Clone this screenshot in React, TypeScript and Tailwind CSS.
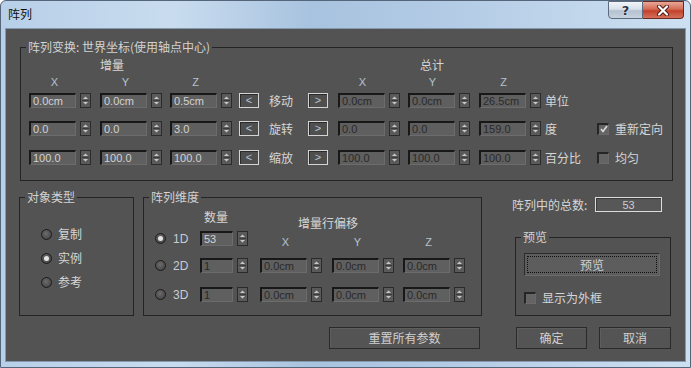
import React from "react";

const cjk = "font-['Noto_Sans_CJK_SC',sans-serif]";
const num = "font-['Liberation_Sans',sans-serif]";

function Spin() {
  return (
    <div className="ml-[4px] flex h-[15px] w-[11px] shrink-0 items-center justify-center border border-[#2b2b2b] bg-[#5a5a5a]">
      <svg width="9" height="13" viewBox="0 0 9 13">
        <path d="M2 5L4.5 2.5L7 5Z" fill="#c8c8c8" />
        <path d="M1 6.5H8" stroke="#3c3c3c" />
        <path d="M2 8H7L4.5 10.5Z" fill="#c8c8c8" />
      </svg>
    </div>
  );
}

function Field({
  v,
  w = "w-[47px]",
  dim = false,
  className = "",
}: {
  v: string;
  w?: string;
  dim?: boolean;
  className?: string;
}) {
  return (
    <div className={"flex shrink-0 items-center " + className}>
      <div
        className={
          "flex h-[15px] items-center border-2 border-b border-r border-[#181818] border-b-[#6c6c6c] border-r-[#6c6c6c] bg-[#5f5f5f] pl-[2px] text-[11px] leading-none " +
          num +
          " " +
          w +
          (dim ? " text-[#2a2a2a]" : " text-[#d2d2d2]")
        }
      >
        {v}
      </div>
      <Spin />
    </div>
  );
}

function Arrow({ c, className = "" }: { c: string; className?: string }) {
  return (
    <div
      className={
        "flex h-[15px] w-[20px] shrink-0 items-center justify-center border border-[#d4d4d4] bg-[#4f4f4f] text-[11px] leading-none text-[#b8c4d2] shadow-[inset_1px_1px_0_#2a2a2a] " +
        num +
        " " +
        className
      }
    >
      {c}
    </div>
  );
}

function Check({ on = false }: { on?: boolean }) {
  return (
    <div className="flex h-[12px] w-[12px] shrink-0 items-center justify-center border-2 border-b border-r border-[#262626] border-b-[#6a6a6a] border-r-[#6a6a6a] bg-[#646464]">
      {on && (
        <svg width="8" height="8" viewBox="0 0 8 8">
          <path d="M1 4L3 6.5L7 1" stroke="#dcdcdc" strokeWidth="1.6" fill="none" />
        </svg>
      )}
    </div>
  );
}

function Radio({ on = false, className = "" }: { on?: boolean; className?: string }) {
  return (
    <span
      className={
        "flex h-[11px] w-[11px] shrink-0 items-center justify-center rounded-full border border-[#1c1c1c] bg-[radial-gradient(circle_at_45%_40%,#6c6c6c,#3c3c3c)] " +
        className
      }
    >
      {on && <span className="h-[5px] w-[5px] rounded-full bg-[#e4e4e4]" />}
    </span>
  );
}

function Group({
  title,
  className = "",
  children,
}: {
  title: string;
  className?: string;
  children?: React.ReactNode;
}) {
  return (
    <fieldset className={"shrink-0 border border-[#242424] " + className}>
      <legend className="ml-[5px] px-[2px] text-[12px] leading-[16px] text-[#d2d2d2]">{title}</legend>
      {children}
    </fieldset>
  );
}

function Btn({ children, className = "" }: { children: React.ReactNode; className?: string }) {
  return (
    <div
      className={
        "flex h-[22px] shrink-0 items-center justify-center border border-[#2a2a2a] bg-[#545454] text-[12px] text-[#d0d0d0] shadow-[inset_1px_1px_0_#5e5e5e] " +
        className
      }
    >
      {children}
    </div>
  );
}

const hdr = "w-[51px] text-center text-[11px] leading-[16px] text-[#b4c2d0] " + num;

export default function App() {
  return (
    <div
      className={
        "flex h-[368px] w-[691px] flex-col rounded-t-[6px] border border-[#55657a] bg-[linear-gradient(90deg,#b7cfe8_0%,#c9dcef_25%,#a8c3df_45%,#b3cbe5_65%,#cde0f1_100%)] text-[12px] text-[#d6d6d6] " +
        cjk
      }
    >
      {/* title bar */}
      <div className="flex h-[27px] shrink-0 items-start justify-between">
        <span className="ml-[7px] mt-[5px] leading-[16px] text-[#111]">阵列</span>
        <div className="mr-[6px] flex">
          <div className="flex h-[18px] w-[35px] items-center justify-center rounded-bl-[4px] border border-[#5b6b80] bg-[linear-gradient(180deg,#f2f5f9_0%,#d8e0ea_45%,#b5c1cf_55%,#c8d2de_100%)] text-[13px] font-bold leading-none text-[#2c3440] [text-shadow:0_0_2px_#fff] font-['DejaVu_Sans',sans-serif]">
            ?
          </div>
          <div className="flex h-[18px] w-[41px] items-center justify-center rounded-br-[4px] border border-l-0 border-[#6a2a20] bg-[linear-gradient(180deg,#e8a898_0%,#d46a55_45%,#c2412b_55%,#d5705a_100%)]">
            <svg width="14" height="11" viewBox="0 0 14 11">
              <path d="M3 1.5L11 9.5M11 1.5L3 9.5" stroke="#4a1a12" strokeWidth="4" strokeLinecap="round" />
              <path d="M3 1.5L11 9.5M11 1.5L3 9.5" stroke="#fff" strokeWidth="2.2" strokeLinecap="round" />
            </svg>
          </div>
        </div>
      </div>

      {/* client area */}
      <div className="ml-[4px] h-[334px] w-[681px] shrink-0 border border-[#8498b0] bg-[#535353]">
        <div className="flex h-full flex-col pl-[13px]">
          {/* array transform */}
          <Group title="阵列变换: 世界坐标(使用轴点中心)" className="ml-[1px] mt-[10px] h-[142px] w-[653px]">
            <div className="mt-[2px] flex leading-[16px]">
              <span className="ml-[79px] w-[320px]">增量</span>
              <span>总计</span>
            </div>
            <div className="mt-[1px] flex">
              <span className={"ml-[8px] " + hdr}>X</span>
              <span className={"ml-[20px] " + hdr}>Y</span>
              <span className={"ml-[19px] " + hdr}>Z</span>
              <span className={"ml-[116px] " + hdr}>X</span>
              <span className={"ml-[19px] " + hdr}>Y</span>
              <span className={"ml-[20px] " + hdr}>Z</span>
            </div>
            {[
              { a: ["0.0cm", "0.0cm", "0.5cm"], l: "移动", t: ["0.0cm", "0.0cm", "26.5cm"], u: "单位", c: null, mt: "mt-[3px]" },
              { a: ["0.0", "0.0", "3.0"], l: "旋转", t: ["0.0", "0.0", "159.0"], u: "度", c: { on: true, l: "重新定向" }, mt: "mt-[13px]" },
              { a: ["100.0", "100.0", "100.0"], l: "缩放", t: ["100.0", "100.0", "100.0"], u: "百分比", c: { on: false, l: "均匀" }, mt: "mt-[14px]" },
            ].map((r) => (
              <div key={r.l} className={"flex h-[15px] items-center leading-[16px] " + r.mt}>
                <Field v={r.a[0]} className="ml-[8px]" />
                <Field v={r.a[1]} className="ml-[9px]" />
                <Field v={r.a[2]} className="ml-[8px]" />
                <Arrow c="<" className="ml-[7px]" />
                <span className="ml-[10px] w-[39px]">{r.l}</span>
                <Arrow c=">" />
                <Field v={r.t[0]} dim className="ml-[10px]" />
                <Field v={r.t[1]} dim className="ml-[8px]" />
                <Field v={r.t[2]} dim className="ml-[9px]" />
                <span className="ml-[4px] w-[52px]">{r.u}</span>
                {r.c && (
                  <div className="flex items-center">
                    <Check on={r.c.on} />
                    <span className="ml-[6px]">{r.c.l}</span>
                  </div>
                )}
              </div>
            ))}
          </Group>

          {/* middle row */}
          <div className="mt-[8px] flex items-start">
            <Group title="对象类型" className="h-[127px] w-[115px]">
              <div className="mt-[21px] flex flex-col gap-[8px] pl-[21px] leading-[16px]">
                {[
                  { l: "复制", on: false },
                  { l: "实例", on: true },
                  { l: "参考", on: false },
                ].map((o) => (
                  <div key={o.l} className="flex items-center">
                    <Radio on={o.on} />
                    <span className="ml-[6px]">{o.l}</span>
                  </div>
                ))}
              </div>
            </Group>

            <Group title="阵列维度" className="ml-[9px] h-[127px] w-[339px]">
              <div className="mt-[4px] flex h-[22px] items-start leading-[16px]">
                <span className="ml-[60px] w-[94px]">数量</span>
                <span className="mt-[6px]">增量行偏移</span>
              </div>
              <div className="flex h-[19px] items-start">
                <div className="flex h-[15px] items-center">
                  <Radio on className="ml-[11px]" />
                  <span className={"ml-[7px] w-[27px] text-[12px] text-[#c4ccd6] " + num}>1D</span>
                  <Field v="53" w="w-[33px]" />
                </div>
                <span className={"ml-[12px] mt-[3px] " + hdr}>X</span>
                <span className={"ml-[21px] mt-[3px] " + hdr}>Y</span>
                <span className={"ml-[20px] mt-[3px] " + hdr}>Z</span>
              </div>
              {["2D", "3D"].map((d, i) => (
                <div key={d} className={"flex h-[15px] items-center " + (i === 0 ? "mt-[8px]" : "mt-[14px]")}>
                  <Radio className="ml-[11px]" />
                  <span className={"ml-[7px] w-[27px] text-[12px] text-[#c4ccd6] " + num}>{d}</span>
                  <Field v="1" w="w-[33px]" dim />
                  <Field v="0.0cm" dim className="ml-[12px]" />
                  <Field v="0.0cm" dim className="ml-[10px]" />
                  <Field v="0.0cm" dim className="ml-[9px]" />
                </div>
              ))}
            </Group>

            <div className="ml-[30px] flex flex-col">
              <div className="mt-[8px] flex h-[15px] items-center leading-[16px]">
                <span className="w-[83px]">阵列中的总数:</span>
                <div className={"flex h-[15px] w-[67px] items-center justify-center border border-[#dcdcdc] bg-[#575757] text-[11px] text-[#c8ccd4] shadow-[inset_1px_1px_0_#3a3a3a] " + num}>
                  53
                </div>
              </div>
              <Group title="预览" className="ml-[3px] mt-[17px] h-[87px] w-[156px]">
                <div className="ml-[8px] mt-[8px] flex h-[23px] w-[136px] border border-[#2c2c2c] border-b-[#6a6a6a] border-r-[#6a6a6a] bg-[#5d5d5d] p-[2px]">
                  <div className="flex flex-1 items-center justify-center border border-dotted border-[#111] text-[#d0d0d0]">
                    预览
                  </div>
                </div>
                <div className="ml-[8px] mt-[14px] flex items-center leading-[16px]">
                  <Check />
                  <span className="ml-[6px]">显示为外框</span>
                </div>
              </Group>
            </div>
          </div>

          {/* bottom buttons */}
          <div className="mt-[11px] flex">
            <Btn className="ml-[310px] w-[151px]">重置所有参数</Btn>
            <Btn className="ml-[36px] w-[71px]">确定</Btn>
            <Btn className="ml-[12px] w-[72px]">取消</Btn>
          </div>
        </div>
      </div>
    </div>
  );
}
